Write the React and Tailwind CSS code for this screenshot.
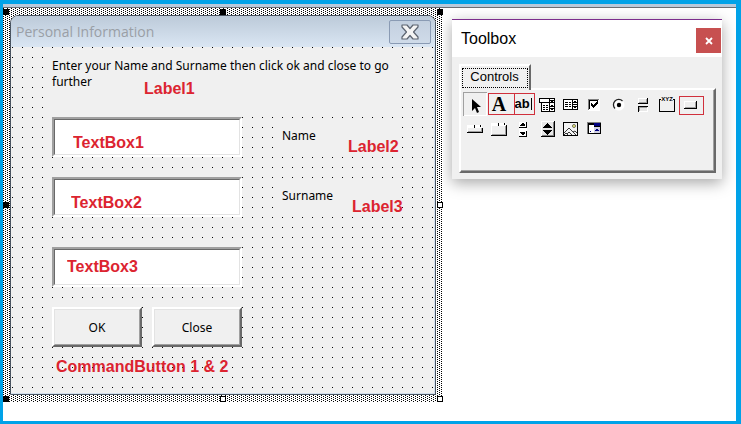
const hatch =
  "bg-white bg-[conic-gradient(from_270deg_at_1px_1px,#000_90deg,transparent_0),conic-gradient(from_270deg_at_1px_1px,#000_90deg,transparent_0)] bg-[size:4px_2px,4px_2px] bg-[position:0_0,2px_1px]";

const note =
  "font-['Liberation_Sans',sans-serif] text-base leading-6 font-bold text-[#dc2430] whitespace-nowrap";

const Handle = ({ filled = false, className }) => (
  <span
    className={`absolute size-[6px] border border-black ${filled ? "bg-black" : "bg-white"} ${className}`}
  />
);

const Field = ({ id, name, className }) => (
  <div className="h-10 border-2 border-t-[#a0a0a0] border-l-[#a0a0a0] border-r-white border-b-white bg-white">
    <input
      id={id}
      type="text"
      aria-label={name}
      defaultValue={name}
      className={`block h-full w-full border border-t-[#696969] border-l-[#696969] border-r-[#e3e3e3] border-b-[#e3e3e3] outline-none ${note} ${className}`}
    />
  </div>
);

const CommandButton = ({ children }) => (
  <button
    type="button"
    className="h-10 w-[90px] border-2 border-t-white border-l-white border-r-[#696969] border-b-[#696969] bg-[#f0f0f0]"
  >
    <span className="flex h-full items-center justify-center border border-t-[#e3e3e3] border-l-[#e3e3e3] border-r-[#a0a0a0] border-b-[#a0a0a0] pt-px">
      {children}
    </span>
  </button>
);

const Icon = ({ children }) => (
  <svg viewBox="0 0 24 24" className="block size-6" shapeRendering="crispEdges" fill="none">
    {children}
  </svg>
);

const tools = [
  {
    label: "Select Objects",
    icon: (
      <Icon>
        <path d="M.5 23.5V.5H23.5" stroke="#a0a0a0" />
        <path d="M1 23.5H23.5V1" stroke="#fff" />
        <path d="M9 7v12l3-3 2 5 2-1-2-5h4z" fill="#000" shapeRendering="auto" />
      </Icon>
    ),
  },
  {
    label: "Label",
    icon: (
      <span className="block font-['Liberation_Serif',serif] text-xl leading-6 font-bold">A</span>
    ),
  },
  {
    label: "TextBox",
    icon: (
      <span className="flex items-center justify-center gap-px font-['Liberation_Sans',sans-serif] text-[13px] leading-6 font-bold">
        ab
        <span className="h-3 w-px bg-black" />
      </span>
    ),
  },
  {
    label: "ComboBox",
    icon: (
      <Icon>
        <path d="M4 6h16v5H4zM6 10h14v10H6z" fill="#000" />
        <path d="M5 7h9v3H5zM15 7h4v3h-4zM7 11h7v8H7zM15 11h4v8h-4z" fill="#fff" />
        <path d="M15 8h4v1h-4zM16 9h2v1h-2zM8 13h2v1H8zM11 13h2v1h-2zM8 15h2v1H8zM11 15h2v1h-2zM8 17h2v1H8zM11 17h2v1h-2zM16 13h2v1h-2zM15 14h4v1h-4zM15 16h4v1h-4zM16 17h2v1h-2z" fill="#000" />
      </Icon>
    ),
  },
  {
    label: "ListBox",
    icon: (
      <Icon>
        <path d="M4 7h15v11H4z" fill="#000" />
        <path d="M5 8h8v9H5zM14 8h4v4h-4zM14 13h4v4h-4z" fill="#fff" />
        <path d="M6 10h3v1H6zM10 10h2v1h-2zM6 12h3v1H6zM10 12h2v1h-2zM6 14h3v1H6zM10 14h2v1h-2zM15 9h2v1h-2zM14 10h4v1h-4zM14 14h4v1h-4zM15 15h2v1h-2z" fill="#000" />
      </Icon>
    ),
  },
  {
    label: "CheckBox",
    icon: (
      <Icon>
        <path d="M5 7h12v12H5z" fill="#fff" />
        <path d="M5 7h11v1H5zM5 7h1v11H5z" fill="#808080" />
        <path d="M6 8h9v1H6zM6 8h1v9H6z" fill="#000" />
        <path d="M8 11v3l2 2 5-5V9l-5 4z" fill="#000" />
      </Icon>
    ),
  },
  {
    label: "OptionButton",
    icon: (
      <Icon>
        <g shapeRendering="auto">
          <circle cx="12" cy="13" r="5.5" fill="#fff" />
          <path d="M8 16.500A5 5 0 0 1 15.500 9" stroke="#222" strokeWidth="1.300" />
          <circle cx="12" cy="13" r="2.200" fill="#000" />
        </g>
      </Icon>
    ),
  },
  {
    label: "ToggleButton",
    icon: (
      <Icon>
        <path d="M7 6h10v6H7zM7 14h10v6H7z" fill="#fff" />
        <path d="M8 7h7v3H8zM9 16h7v3H9z" fill="#e8e8e8" />
        <path d="M8 10h8v1H8zM15 7h1v4h-1zM8 15h8v1H8zM8 15h1v4H8z" fill="#a0a0a0" />
        <path d="M7 11h10v1H7zM16 6h1v6h-1zM7 14h10v1H7zM7 14h1v6H7z" fill="#000" />
      </Icon>
    ),
  },
  {
    label: "Frame",
    icon: (
      <Icon>
        <path d="M6 7.500H4.500v12h15v-12H18" stroke="#000" />
        <text x="12" y="9" textAnchor="middle" fontSize="6" fontWeight="700" fontFamily="Liberation Sans" fill="#000">
          XYZ
        </text>
      </Icon>
    ),
  },
  {
    label: "CommandButton",
    icon: (
      <Icon>
        <path d="M5 9h13v8H5z" fill="#fff" />
        <path d="M6 10h11v6H6z" fill="#efefef" />
        <path d="M6 15h11v1H6zM16 10h1v6h-1z" fill="#a0a0a0" />
        <path d="M5 16h13v1H5zM17 9h1v8h-1z" fill="#000" />
      </Icon>
    ),
  },
  {
    label: "TabStrip",
    icon: (
      <Icon>
        <path d="M4 9h15v7H4z" fill="#fff" />
        <path d="M5 12h13v3H5z" fill="#efefef" />
        <path d="M5 15h14v1H5zM18 12h1v4h-1z" fill="#a0a0a0" />
        <path d="M4 16h16v1H4zM19 12h1v5h-1zM11 9h1v3h-1zM17 9h1v2h-1z" fill="#000" />
      </Icon>
    ),
  },
  {
    label: "MultiPage",
    icon: (
      <Icon>
        <path d="M4 7h15v12H4z" fill="#fff" />
        <path d="M5 10h13v8H5z" fill="#efefef" />
        <path d="M5 18h14v1H5zM18 10h1v9h-1z" fill="#a0a0a0" />
        <path d="M4 19h16v1H4zM19 9h1v11h-1zM11 7h1v3h-1zM17 7h1v2h-1z" fill="#000" />
      </Icon>
    ),
  },
  {
    label: "ScrollBar",
    icon: (
      <Icon>
        <path d="M8 6h8v15H8z" fill="#fff" />
        <path d="M8 11h8v1H8zM15 6h1v6h-1zM8 20h8v1H8zM15 15h1v6h-1z" fill="#000" />
        <path d="M11 7h2v1h-2zM10 8h4v1h-4zM9 9h5v1H9zM9 16h5v1H9zM10 17h4v1h-4zM11 18h2v1h-2z" fill="#000" />
      </Icon>
    ),
  },
  {
    label: "SpinButton",
    icon: (
      <Icon>
        <path d="M6 5h14v16H6z" fill="#fff" />
        <path d="M7 6h12v14H7z" fill="#e8e8e8" />
        <path d="M7 19h12v1H7zM18 6h1v14h-1z" fill="#808080" />
        <path d="M6 20h14v1H6zM19 5h1v16h-1z" fill="#000" />
        <path d="M12 7h1v1h-1zM11 8h3v1h-3zM10 9h5v1h-5zM9 10h7v1H9zM8 11h9v1H8zM8 14h9v1H8zM9 15h7v1H9zM10 16h5v1h-5zM11 17h3v1h-3zM12 18h1v1h-1z" fill="#000" />
      </Icon>
    ),
  },
  {
    label: "Image",
    icon: (
      <Icon>
        <path d="M4.500 6.500h14v13h-14z" fill="#f4f4f4" stroke="#000" />
        <circle cx="15" cy="10" r="1.500" fill="#ffff80" stroke="#333" strokeWidth=".7" shapeRendering="auto" />
        <path d="m5 17 5-5 7 7M5 19l2-2 2 2M8 18l2-2 3 3M14 16l2-1 2 2" stroke="#222" strokeWidth=".9" shapeRendering="auto" />
      </Icon>
    ),
  },
  {
    label: "RefEdit",
    icon: (
      <Icon>
        <path d="M4 6h14v12H4z" fill="#808080" />
        <path d="M5 7h13v11H5z" fill="#000" />
        <path d="M6 9h5v8H6z" fill="#fff" />
        <path d="M11 7h6v3h-6z" fill="#000080" />
        <path d="M11 11h6v6h-6z" fill="#d0d0e4" />
        <path d="M13 13h2v1h-2zM12 14h4v1h-4zM7 15h1v1H7z" fill="#000080" />
      </Icon>
    ),
  },
];

const UserForm = () => (
  <section className={`relative min-w-[440px] flex-1 p-[7px] ${hatch}`}>
    <form className="overflow-hidden rounded-t-lg border border-[#4a5460] bg-[#f0f0f0]">
      <header className="flex h-[31px] items-center justify-between bg-linear-to-b from-[#bccad9] to-[#dae6f3] pr-1 pl-[5px]">
        <h1 className="pt-px font-['Open_Sans','Noto_Sans',sans-serif] text-sm text-[#9a9fa6]">
          Personal Information
        </h1>
        <button
          type="button"
          aria-label="Close window"
          className="flex h-6 w-[42px] items-center justify-center rounded-xs border border-[#8a9bb4] bg-linear-to-b from-[#c3d0df] to-[#cfdbe9]"
        >
          <svg viewBox="0 0 18 16" className="h-4 w-[18px]">
            <path
              d="M1 1h5l3 3.500L12 1h5v2l-4.500 5 4.500 5v2h-5l-3-3.500L6 15H1v-2l4.500-5L1 3z"
              fill="#f4f4f4"
              stroke="#5c6470"
              strokeWidth="1.200"
              strokeLinejoin="round"
            />
          </svg>
        </button>
      </header>

      <div className="border-r border-b border-[#d3e0ee] bg-[conic-gradient(from_270deg_at_1px_1px,#000_90deg,transparent_0)] bg-[size:10px_10px] bg-[position:1px_0] pt-[10px] pr-8 pb-[14px] pl-[41px] font-['Noto_Sans',sans-serif] text-xs leading-4 text-black">
        <div className="relative h-[60px] w-[350px] bg-[#f0f0f0] pt-px">
          <p>
            Enter your Name and Surname then click ok and close to go <br />
            further
          </p>
          <span className={`absolute top-5 left-[92px] ${note}`}>Label1</span>
        </div>

        <div className="grid w-[350px] grid-cols-[190px_120px] justify-between gap-y-5">
          <Field id="name" name="TextBox1" className="pt-3 pl-[18px]" />
          <label htmlFor="name" className="relative mt-[10px] h-[30px] bg-[#f0f0f0] pt-px">
            Name
            <span className={`absolute top-2 left-[66px] ${note}`}>Label2</span>
          </label>
          <Field id="surname" name="TextBox2" className="pt-3 pl-4" />
          <label htmlFor="surname" className="relative mt-[10px] h-[30px] bg-[#f0f0f0] pt-px">
            Surname
            <span className={`absolute top-2 left-[70px] ${note}`}>Label3</span>
          </label>
        </div>

        <div className="mt-[30px] w-[190px]">
          <Field id="other" name="TextBox3" className="pl-3" />
        </div>

        <div className="mt-5 flex gap-[10px]">
          <CommandButton>OK</CommandButton>
          <CommandButton>Close</CommandButton>
        </div>
        <p className={`mt-2 pl-1 ${note}`}>CommandButton 1 &amp; 2</p>
      </div>
    </form>

    <Handle filled className="top-px left-0" />
    <Handle filled className="top-px left-1/2 -translate-x-1/2" />
    <Handle filled className="top-px right-0" />
    <Handle filled className="top-1/2 left-0 -translate-y-1/2" />
    <Handle className="top-1/2 right-0 -translate-y-1/2" />
    <Handle filled className="bottom-0 left-0" />
    <Handle className="bottom-0 left-1/2 -translate-x-1/2" />
    <Handle className="right-0 bottom-0" />
  </section>
);

const Toolbox = () => (
  <aside className="mt-[11px] w-[270px] shrink-0 border-t border-[#7c2d8c] bg-[#f0f0f0] pb-[6px] font-['Liberation_Sans',sans-serif] text-black shadow-[0_4px_14px_rgba(0,0,0,0.35)]">
    <header className="flex h-[37px] items-center justify-between bg-white pr-px pl-[9px]">
      <h2 className="text-base">Toolbox</h2>
      <button
        type="button"
        aria-label="Close toolbox"
        className="mt-1 flex size-[25px] items-center justify-center bg-[#c75050]"
      >
        <svg viewBox="0 0 8 8" className="size-2">
          <path d="m1 1 6 6M7 1 1 7" stroke="#fff" strokeWidth="1.800" />
        </svg>
      </button>
    </header>

    <div className="pt-[7px] pr-[6px] pl-[7px]">
      <button
        type="button"
        className="relative z-10 -mb-[2px] block h-[26px] w-[72px] border-t-2 border-r-2 border-l-2 border-t-white border-r-[#696969] border-l-white bg-[#f0f0f0] p-px text-[13px]"
      >
        <span className="block h-5 border border-dotted border-black pr-px leading-4">Controls</span>
      </button>
      <div className="h-[85px] border-2 border-t-white border-l-white border-r-[#696969] border-b-[#696969]">
        <div className="relative flex h-full flex-wrap content-start border-r border-b border-[#a0a0a0] pt-[2px] pl-[2px]">
          {tools.map((tool) => (
            <button key={tool.label} type="button" aria-label={tool.label} className="size-6">
              {tool.icon}
            </button>
          ))}
          <span className="pointer-events-none absolute top-[3px] left-[27px] flex h-[22px] w-[47px] border border-[#d0303c]">
            <span className="w-[26px] border-r border-[#d0303c]" />
          </span>
          <span className="pointer-events-none absolute top-[6px] left-[218px] h-[19px] w-[25px] border border-[#d0303c]" />
        </div>
      </div>
    </div>
  </aside>
);

export default function App() {
  return (
    <main className="min-h-screen border-t-4 border-r-[5px] border-b-[3px] border-l-[3px] border-[#00a2e8] bg-white">
      <div className="h-1 border-b border-[#6a6e74] bg-[#b9c9da]" />
      <div className="flex items-start gap-[9px] pr-[14px]">
        <UserForm />
        <Toolbox />
      </div>
    </main>
  );
}
